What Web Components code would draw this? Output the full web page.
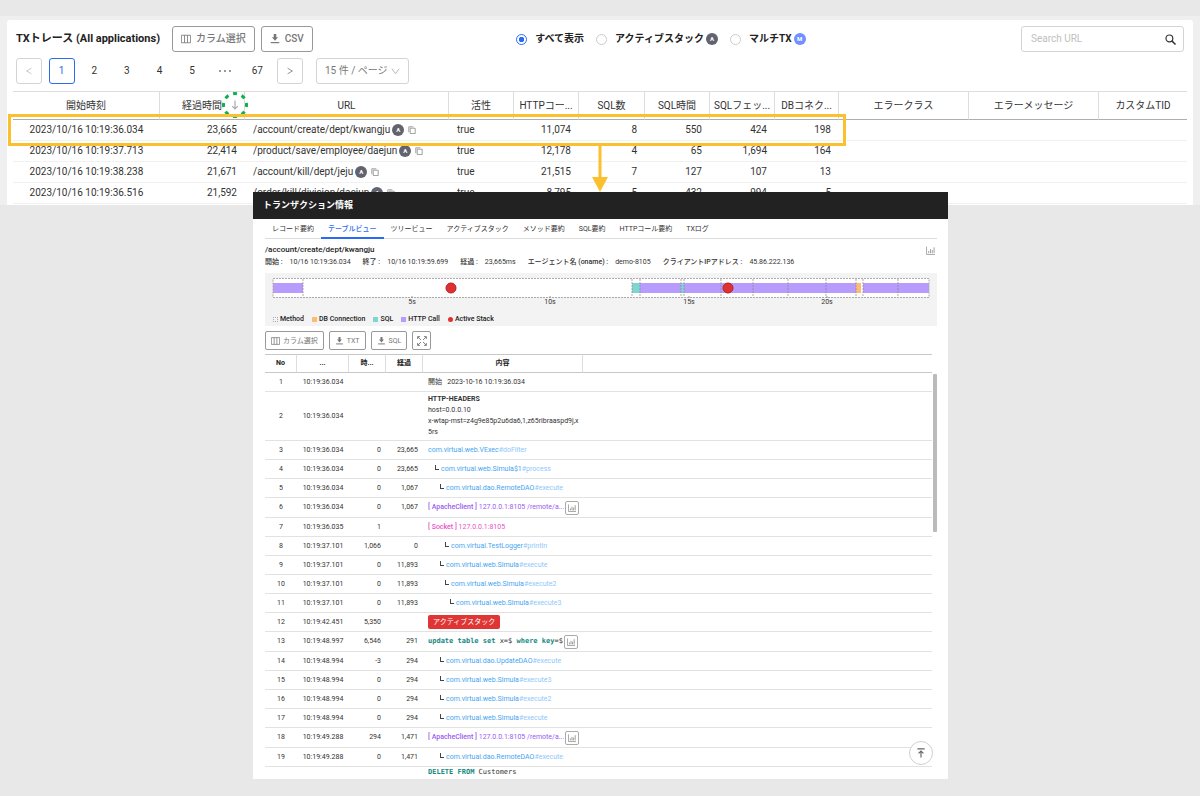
<!DOCTYPE html>
<html lang="ja">
<head>
<meta charset="utf-8">
<title>TXトレース</title>
<style>
  body { margin: 0; background: #e8e8e8; font-family: Roboto, "Noto Sans CJK JP", sans-serif; color: #333; }
</style>
</head>
<body>
<trace-page></trace-page>
<script>
const define = (name, html, setup) => customElements.define(name, class extends HTMLElement {
  connectedCallback() {
    if (this.shadowRoot) return;
    const root = this.attachShadow({ mode: 'open' });
    const tpl = document.createElement('template');
    tpl.innerHTML = typeof html === 'function' ? html(this) : html;
    root.append(tpl.content.cloneNode(true));
    if (setup) setup(root, this);
  }
});

const ICONS = {
  columns: ['0 0 12 10', '<path d="M.5 .5h11v9H.5zM4.2 .5v9M7.8 .5v9" fill="none" stroke="currentColor"/>'],
  download: ['0 0 10 11', '<path d="M3.6 0h2.8v3.6h2L5 7.4 1.6 3.6h2z" fill="currentColor"/><path d="M.3 9.5h9.4" stroke="currentColor" stroke-width="1.3"/>'],
  search: ['0 0 12 12', '<circle cx="4.8" cy="4.8" r="3.7" fill="none" stroke="currentColor" stroke-width="1.3"/><path d="M7.5 7.5l4 4" stroke="currentColor" stroke-width="1.6"/>'],
  copy: ['0 0 9 9', '<path d="M.9 7V.9H6M2.5 2.5h5.6v6H2.5z" fill="none" stroke="currentColor" stroke-width=".9"/>'],
  down: ['0 0 10 10', '<path d="M1 2.500L5 8l4-5.500" fill="none" stroke="currentColor" stroke-width=".9"/>'],
  left: ['0 0 10 10', '<path d="M8 1.500L2 5l6 3.500" fill="none" stroke="currentColor"/>'],
  right: ['0 0 10 10', '<path d="M2 1.500L8 5 2 8.500" fill="none" stroke="currentColor"/>'],
  sort: ['0 0 8 10', '<path d="M4 .500v8.500M1.200 6.200L4 9l2.800-2.800" fill="none" stroke="currentColor" stroke-width="1.200"/>'],
  expand: ['0 0 10 10', '<path d="M.6 3V.6H3M7 .6h2.400V3M9.400 7v2.400H7M3 9.400H.6V7M.8 .8l3.200 3.200M9.200 .8L6 4M9.200 9.200L6 6M.8 9.200L4 6" fill="none" stroke="currentColor" stroke-width=".9"/>'],
  chart: ['0 0 10 10', '<path d="M.6 .5v8.900H10" fill="none" stroke="currentColor" stroke-width=".9"/><path d="M3 8V5.500M5 8V3.500M7 8V4.500M9 8V1.500" stroke="currentColor" stroke-width="1"/>'],
  top: ['0 0 10 11', '<path d="M1 1h8M5 10.500V3.500M2.300 6L5 3.300 7.700 6" fill="none" stroke="currentColor" stroke-width="1.300"/>']
};

define('ui-icon', el => {
  const [box, body] = ICONS[el.getAttribute('name')];
  return `<style>:host{display:inline-flex;flex:none;width:10px;height:10px}svg{width:100%;height:100%;display:block}</style>
  <svg viewBox="${box}" aria-hidden="true">${body}</svg>`;
});

define('ui-badge', `<style>
  :host{display:inline-flex;flex:none;align-items:center;justify-content:center;width:12px;height:12px;border-radius:50%;background:#636370;color:#fff;font-size:6px;line-height:12px;font-weight:700}
  :host([tone="blue"]){background:#7090ff}
</style><slot></slot>`);

define('ui-button', `<style>
  :host{display:inline-flex}
  button{box-sizing:border-box;display:flex;align-items:center;gap:5px;height:26px;padding:0 8px;border:1px solid #999;border-radius:3px;background:#fff;color:#777;font:500 10px/12px Roboto,"Noto Sans CJK JP",sans-serif;white-space:nowrap}
  :host([size="small"]) button{height:19px;padding:0 5px;gap:3px;border-radius:2px;font-size:7px;font-weight:400;color:#777}
  :host([size="square"]) button{height:19px;width:19px;padding:0;justify-content:center;border-radius:2px}
  :host([size="mini"]) button{height:14px;width:14px;padding:0;justify-content:center;border-radius:2px;border-color:#aaa}
</style><button type="button"><slot></slot></button>`);

define('ui-radio', el => `<style>
  :host{display:inline-flex;margin-right:12px}
  label{display:flex;align-items:center;gap:8px;font-size:10px;line-height:14px;font-weight:700;color:#222;white-space:nowrap}
  input{appearance:none;box-sizing:border-box;margin:0;width:11px;height:11px;border:1px solid #ccc;border-radius:50%;background:#fff}
  input:checked{border-color:#2b6bf3;background:radial-gradient(circle,#2b6bf3 0 2.5px,#fff 3px)}
  span{display:flex;align-items:center;gap:2px}
</style><label><input type="radio" name="kind"${el.hasAttribute('checked') ? ' checked' : ''}><span><slot></slot></span></label>`);

define('page-nav', `<style>
  :host{display:flex;gap:13px;align-items:center}
  nav{display:flex;justify-content:space-between;width:287px}
  button,select{box-sizing:border-box;height:26px;border:1px solid transparent;border-radius:3px;background:none;padding:0;color:#333;font:400 10px/14px Roboto,"Noto Sans CJK JP",sans-serif}
  button{width:26px;display:flex;align-items:center;justify-content:center}
  .step{border-color:#d4d4d4;color:#777}
  .step:disabled{color:#bbb}
  .on{border-color:#2b6bf3;color:#2b6bf3}
  .more{align-items:center;display:flex;width:26px;justify-content:center;gap:3px}
  .more i{width:2px;height:2px;border-radius:50%;background:#777}
  .size{display:grid;align-items:center}
  .size>*{grid-area:1/1}
  select{appearance:none;width:93px;border-color:#d4d4d4;color:#777;padding-left:8px}
  .step ui-icon{width:8px;height:10px}
  .size ui-icon{justify-self:end;width:9px;margin-right:9px;color:#aaa;pointer-events:none}
</style>
<nav aria-label="ページ">
  <button class="step" disabled aria-label="前"><ui-icon name="left"></ui-icon></button>
  <button class="on">1</button><button>2</button><button>3</button><button>4</button><button>5</button>
  <span class="more"><i></i><i></i><i></i></span><button>67</button>
  <button class="step" aria-label="次"><ui-icon name="right"></ui-icon></button>
</nav>
<div class="size"><select aria-label="表示件数"><option>15 件 / ページ</option></select><ui-icon name="down"></ui-icon></div>`);

const TX = [
  ['2023/10/16 10:19:36.034', '23,665', '/account/create/dept/kwangju', 'true', '11,074', '8', '550', '424', '198'],
  ['2023/10/16 10:19:37.713', '22,414', '/product/save/employee/daejun', 'true', '12,178', '4', '65', '1,694', '164'],
  ['2023/10/16 10:19:38.238', '21,671', '/account/kill/dept/jeju', 'true', '21,515', '7', '127', '107', '13'],
  ['2023/10/16 10:19:36.516', '21,592', '/order/kill/division/daejun', 'true', '8,795', '5', '432', '994', '5']
];
const HEADS = ['開始時刻', '経過時間', 'URL', '活性', 'HTTPコー...', 'SQL数', 'SQL時間', 'SQLフェッ...', 'DBコネク...', 'エラークラス', 'エラーメッセージ', 'カスタムTID'];
const WIDTHS = [147, 85, 204, 65, 65, 66, 65, 65, 64, 130, 130];

define('tx-table', `<style>
  :host{display:block;position:relative}
  table{width:100%;table-layout:fixed;border-collapse:separate;border-spacing:0;font-size:10px;line-height:14px;color:#333}
  th{height:29px;box-sizing:border-box;padding:0;border-top:1px solid #ddd;border-bottom:1px solid #aaafb5;border-right:1px solid #ddd;font-weight:400;white-space:nowrap}
  th:last-child{border-right:0}
  td{box-sizing:border-box;height:21px;padding:0 8px;border-bottom:1px solid #f1f1f1;text-align:right;white-space:nowrap}
  td:first-child{text-align:center}
  td.l{text-align:left}
  td div{display:flex;align-items:center;gap:2px}
  td ui-icon{width:8px;height:8px;color:#888;margin-left:2px}
  .row{position:absolute;box-sizing:border-box;left:-5px;top:23px;width:838px;height:32px;border:3px solid #fbc02d}
  .arrow{position:absolute;left:579px;top:55px;width:16px;height:46px}
  .ring{position:absolute;left:209px;top:1px;width:26px;height:26px}
  .sort{position:absolute;left:217px;top:9px;color:#aaa}
</style>
<table><colgroup></colgroup><thead><tr></tr></thead><tbody></tbody></table>
<ui-icon class="sort" name="sort"></ui-icon>
<svg class="ring" viewBox="0 0 26 26" aria-hidden="true"><circle cx="13" cy="13" r="11.500" fill="none" stroke="#0db14b" stroke-width="3" pathLength="72" stroke-dasharray="4 5" stroke-dashoffset="2"/></svg>
<div class="row"></div>
<svg class="arrow" viewBox="0 0 16 46" aria-hidden="true"><path d="M6.500 0h3v31H16L8 46 0 31h6.500z" fill="#fbc02d"/></svg>`,
root => {
  root.querySelector('colgroup').innerHTML = WIDTHS.map(w => `<col style="width:${w}px">`).join('') + '<col>';
  root.querySelector('thead tr').innerHTML = HEADS.map(h => `<th scope="col">${h}</th>`).join('');
  root.querySelector('tbody').innerHTML = TX.map(r => '<tr>' + r.map((c, i) =>
    i === 2 ? `<td class="l"><div>${c}<ui-badge>A</ui-badge><ui-icon name="copy"></ui-icon></div></td>`
            : `<td${i === 3 ? ' class="l"' : ''}>${c}</td>`).join('') + '<td></td><td></td><td></td></tr>').join('');
});

define('trace-panel', `<style>
  :host{display:block;background:#efefef;padding:4px 7px 0}
  section{background:#fff;border-radius:3px 3px 0 0;padding:6px 6px 1px}
  header{display:flex;align-items:center;justify-content:space-between;padding:0 3px}
  .left{display:flex;align-items:center;gap:6px}
  h1{margin:0 6px 0 0;font-size:11px;line-height:16px;font-weight:700;color:#222;white-space:nowrap}
  .kinds{display:flex}
  .search{box-sizing:border-box;display:flex;align-items:center;width:163px;height:26px;border:1px solid #d4d4d4;border-radius:3px;padding:0 7px 0 9px;color:#333}
  input{flex:1;min-width:0;border:0;padding:0;outline:0;background:none;font:400 10px/14px Roboto,sans-serif}
  input::placeholder{color:#c0c0c0}
  page-nav{padding:6px 3px 7px}
  .search ui-icon{width:11px;height:11px}
</style>
<section>
  <header>
    <div class="left"><h1>TXトレース (All applications)</h1>
      <ui-button><ui-icon name="columns"></ui-icon>カラム選択</ui-button>
      <ui-button><ui-icon name="download"></ui-icon>CSV</ui-button></div>
    <div class="kinds"><ui-radio checked>すべて表示</ui-radio><ui-radio>アクティブスタック<ui-badge>A</ui-badge></ui-radio><ui-radio>マルチTX<ui-badge tone="blue">M</ui-badge></ui-radio></div>
    <label class="search"><input type="text" placeholder="Search URL" aria-label="Search URL"><ui-icon name="search"></ui-icon></label>
  </header>
  <page-nav></page-nav>
  <tx-table></tx-table>
</section>`);

define('time-line', `<style>
  :host{display:block;box-sizing:border-box;height:53px;background:#f3f3f3;padding:5px 8px 0 8px}
  svg{display:block;width:100%;height:30px;overflow:visible}
  text{font-size:7px;fill:#333;text-anchor:middle}
  ul{display:flex;gap:8px;margin:0;padding:6px 0 0;list-style:none;font-size:7px;line-height:10px;font-weight:500;color:#222}
  li{display:flex;align-items:center;gap:2px}
  i{box-sizing:border-box;width:5px;height:5px}
</style>
<svg role="img" aria-label="タイムライン"></svg>
<ul><li><i style="border:1px dotted #aaa"></i>Method</li><li><i style="background:#fdbb74"></i>DB Connection</li><li><i style="background:#7dd6cf"></i>SQL</li><li><i style="background:#b79bfd"></i>HTTP Call</li><li><i style="background:#e03131;border-radius:50%"></i>Active Stack</li></ul>`,
root => {
  const p = x => (x / 656 * 100).toFixed(3) + '%';
  const bar = (a, b, c) => `<rect x="${p(a)}" y="5" width="${p(b - a)}" height="10" fill="${c}"/>`;
  const V = '#b79bfd', T = '#7dd6cf', O = '#fdbb74';
  root.querySelector('svg').innerHTML =
    '<rect width="100%" height="19" fill="#fff"/>' +
    bar(0, 30, V) + bar(359, 367, T) + bar(367, 583, V) + bar(408, 411, T) + bar(583, 588, O) + bar(590, 656, V) +
    '<rect x="0" y=".5" width="100%" height="19" fill="none" stroke="#aaa" stroke-dasharray="2 1"/>' +
    [30, 359, 367, 408, 411, 448, 480, 515, 553, 583, 590, 625].map(x =>
      `<line x1="${p(x)}" x2="${p(x)}" y1="1" y2="19" stroke="#888" stroke-width=".7" stroke-dasharray="2 1"/>`).join('') +
    [178, 455].map(x => `<circle cx="${p(x)}" cy="10" r="5" fill="#e03131" stroke="#b51f1f"/>`).join('') +
    [[139, '5s'], [277, '10s'], [416, '15s'], [554, '20s']].map(([x, t]) =>
      `<line x1="${p(x)}" x2="${p(x)}" y1="18" y2="20" stroke="#999"/><text x="${p(x)}" y="26">${t}</text>`).join('');
});

const fn = (depth, cls, method) => `<div class="fn d${depth}">${depth ? '<i></i>' : ''}<span><b>${cls}</b>#${method}</span></div>`;
const CHART = '<ui-button size="mini"><ui-icon name="chart"></ui-icon></ui-button>';
const APACHE = `<div class="http"><span><b>[ ApacheClient ]</b> 127.0.0.1:8105 /remote/a...</span>${CHART}</div>`;
const STEPS = [
  ['1', '10:19:36.034', '', '', '<div>開始&nbsp;&nbsp; 2023-10-16 10:19:36.034</div>'],
  ['2', '10:19:36.034', '', '', '<div class="head"><b>HTTP-HEADERS</b><br>host=0.0.0.10<br>x-wtap-mst=z4g9e85p2u6da6,1,z65ribraaspd9j,x<br>5rs</div>'],
  ['3', '10:19:36.034', '0', '23,665', fn(0, 'com.virtual.web.VExec', 'doFilter')],
  ['4', '10:19:36.034', '0', '23,665', fn(1, 'com.virtual.web.Simula$1', 'process')],
  ['5', '10:19:36.034', '0', '1,067', fn(2, 'com.virtual.dao.RemoteDAO', 'execute')],
  ['6', '10:19:36.034', '0', '1,067', APACHE],
  ['7', '10:19:36.035', '1', '', '<div class="socket"><span><b>[ Socket ]</b> 127.0.0.1:8105</span></div>'],
  ['8', '10:19:37.101', '1,066', '0', fn(3, 'com.virtual.TestLogger', 'println')],
  ['9', '10:19:37.101', '0', '11,893', fn(2, 'com.virtual.web.Simula', 'execute')],
  ['10', '10:19:37.101', '0', '11,893', fn(3, 'com.virtual.web.Simula', 'execute2')],
  ['11', '10:19:37.101', '0', '11,893', fn(4, 'com.virtual.web.Simula', 'execute3')],
  ['12', '10:19:42.451', '5,350', '', '<span class="stack">アクティブスタック</span>'],
  ['13', '10:19:48.997', '6,546', '291', `<div class="sql"><code><b>update table set</b> x=$ <b>where key</b>=$</code>${CHART}</div>`],
  ['14', '10:19:48.994', '-3', '294', fn(2, 'com.virtual.dao.UpdateDAO', 'execute')],
  ['15', '10:19:48.994', '0', '294', fn(2, 'com.virtual.web.Simula', 'execute3')],
  ['16', '10:19:48.994', '0', '294', fn(2, 'com.virtual.web.Simula', 'execute2')],
  ['17', '10:19:48.994', '0', '294', fn(2, 'com.virtual.web.Simula', 'execute')],
  ['18', '10:19:49.288', '294', '1,471', APACHE],
  ['19', '10:19:49.288', '0', '1,471', fn(2, 'com.virtual.dao.RemoteDAO', 'execute')],
  ['', '', '', '', '<div class="sql"><code><b>DELETE FROM</b> Customers</code></div>']
];

define('step-table', `<style>
  :host{display:flex;gap:1px;max-height:420px;overflow:hidden;align-items:flex-start}
  table{flex:1;width:0;table-layout:fixed;border-collapse:separate;border-spacing:0;font-size:7px;line-height:11px;color:#333}
  th{box-sizing:border-box;height:19px;padding:0;border-top:1px solid #c8c8c8;border-bottom:1px solid #c8c8c8;border-right:1px solid #ddd;font-weight:700;color:#222}
  th:last-child{border-right:0}
  td{box-sizing:border-box;height:19px;padding:0 5px;border-bottom:1px solid #e2e2e2;white-space:nowrap;text-align:right}
  tr.tool td{height:20px}
  tr:last-child td{vertical-align:top}
  td:nth-child(1),td:nth-child(2){text-align:center}
  td:nth-child(5){text-align:left}
  .head{padding:2px 0}
  .fn,.http,.sql{display:flex;align-items:center;gap:1px}
  .fn{color:#8fc8f8;gap:2px}
  .fn b{font-weight:400;color:#45a5f0}
  .fn i{box-sizing:border-box;width:4px;height:5px;margin-bottom:4px;border-left:1px solid #444;border-bottom:1px solid #444}
  .d1{padding-left:7px}.d2{padding-left:12px}.d3{padding-left:17px}.d4{padding-left:22px}
  .http{color:#9a5cf0}.http b,.socket b{font-weight:500}
  .socket{color:#e754c6}
  code{font:400 7px/11px "DejaVu Sans Mono",monospace}
  code b{color:#128a80}
  ui-button ui-icon{width:8px;height:8px;color:#888}
  .stack{display:inline-block;padding:0 5px;border-radius:2px;background:#e03535;color:#fff;line-height:14px}
  .thumb{width:4px;height:158px;margin-top:20px;background:#bbb;border-radius:1px}
</style>
<table><colgroup><col style="width:32px"><col style="width:52px"><col style="width:37px"><col style="width:37px"><col style="width:160px"><col></colgroup>
<thead><tr><th scope="col">No</th><th scope="col">...</th><th scope="col">時...</th><th scope="col">経過</th><th scope="col">内容</th><th></th></tr></thead><tbody></tbody></table>
<div class="thumb"></div>`,
root => {
  root.querySelector('tbody').innerHTML = STEPS.map(r =>
    `<tr${r[4].includes('ui-button') ? ' class="tool"' : ''}>` + r.map(c => `<td>${c}</td>`).join('') + '<td></td></tr>').join('');
});

define('tx-dialog', `<style>
  :host{display:block;position:relative;background:#fff}
  h2{margin:0;padding:0 10px;background:#222;color:#fff;font-size:9px;line-height:27px;height:27px;font-weight:700}
  .body{padding:0 11px 5px 12px}
  nav{display:flex;border-bottom:1px solid #ddd;height:19px}
  nav a{box-sizing:border-box;height:20px;padding:0 7px;font-size:7px;line-height:20px;color:#333;text-decoration:none;white-space:nowrap}
  nav a.on{color:#2b6bf3;border-bottom:2px solid #2b6bf3;font-weight:500}
  .name{display:flex;justify-content:space-between;align-items:center;padding:5px 2px 0 0;font-size:8px;line-height:12px;color:#222}
  h3{margin:0;font-size:8px;font-weight:500}
  .name ui-icon{color:#999;width:9px;height:9px}
  dl{display:flex;gap:12px;margin:0 0 5px;font-size:7px;line-height:12px;white-space:nowrap;color:#333}
  dl div{display:flex;gap:7px}
  dt{font-weight:500}
  dd{margin:0}
  .tools{display:flex;gap:5px;padding:5px 0 4px}
  .tools ui-icon{width:9px;height:8px}
  .tools .big{width:10px;height:10px}
  .top{position:absolute;right:15px;bottom:14px;width:24px;height:24px;padding:0;border:1px solid #d0d0d0;border-radius:50%;background:#fff;color:#666;display:flex;align-items:center;justify-content:center}
</style>
<h2>トランザクション情報</h2>
<div class="body">
  <nav><a href="#r">レコード要約</a><a href="#t" class="on">テーブルビュー</a><a href="#v">ツリービュー</a><a href="#a">アクティブスタック</a><a href="#m">メソッド要約</a><a href="#s">SQL要約</a><a href="#h">HTTPコール要約</a><a href="#l">TXログ</a></nav>
  <div class="name"><h3>/account/create/dept/kwangju</h3><ui-icon name="chart"></ui-icon></div>
  <dl><div><dt>開始 :</dt><dd>10/16 10:19:36.034</dd></div><div><dt>終了 :</dt><dd>10/16 10:19:59.699</dd></div><div><dt>経過 :</dt><dd>23,665ms</dd></div><div><dt>エージェント名 (oname) :</dt><dd>demo-8105</dd></div><div><dt>クライアントIPアドレス :</dt><dd>45.86.222.136</dd></div></dl>
  <time-line></time-line>
  <div class="tools"><ui-button size="small"><ui-icon name="columns"></ui-icon>カラム選択</ui-button><ui-button size="small"><ui-icon name="download"></ui-icon>TXT</ui-button><ui-button size="small"><ui-icon name="download"></ui-icon>SQL</ui-button><ui-button size="square"><ui-icon class="big" name="expand"></ui-icon></ui-button></div>
  <step-table></step-table>
</div>
<button class="top" type="button" aria-label="先頭へ"><ui-icon name="top"></ui-icon></button>`);

define('trace-page', `<style>
  :host{display:grid;align-items:start;padding-top:16px}
  trace-panel,tx-dialog{grid-area:1/1;min-width:0}
  tx-dialog{margin:176px 252px 17px 253px}
</style>
<trace-panel></trace-panel><tx-dialog></tx-dialog>`);
</script>
</body>
</html>
